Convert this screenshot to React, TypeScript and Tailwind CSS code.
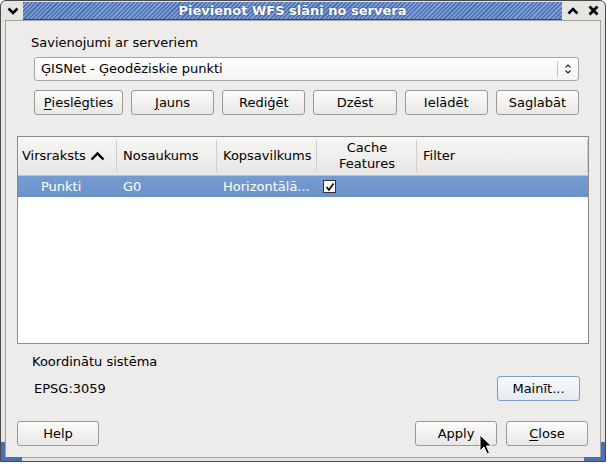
import type React from "react"

// Clearlooks-style push button
function Btn({
  children,
  className = "",
  focus = false,
}: {
  children: React.ReactNode
  className?: string
  focus?: boolean
}) {
  return (
    <div
      className={`flex h-[25px] items-center justify-center rounded-[3px] border text-[13px] text-black ${
        focus
          ? "border-[#7f9bc8] bg-[linear-gradient(#f7f9fc,#e6ebf3)]"
          : "border-[#9c9a96] bg-[linear-gradient(#fbfbfa,#e9e8e6)]"
      } ${className}`}
    >
      {children}
    </div>
  )
}

function U({ children }: { children: React.ReactNode }) {
  return <span className="underline underline-offset-[2px]">{children}</span>
}

function HeaderCell({ children, className = "", last = false }: { children: React.ReactNode; className?: string; last?: boolean }) {
  return (
    <div className={`relative flex h-full items-center ${className}`}>
      {children}
      {!last && <div className="absolute right-0 top-[3px] h-[32px] w-px bg-[#cfcdc9]" />}
    </div>
  )
}

export default function App() {
  return (
    <div className="relative h-[464px] w-[607px] overflow-hidden bg-white font-['DejaVu_Sans',sans-serif] text-[13px] text-black">
      {/* window frame */}
      <div className="relative flex h-[462px] w-[606px] flex-col rounded-t-[6px] border border-[#4a4a4a] bg-[#e6e5e2]">
        {/* title bar */}
        <div className="flex h-[19px] items-stretch">
          <div className="flex w-[22px] items-center justify-center pl-[2px]">
            <svg width="12" height="8" viewBox="0 0 12 8">
              <polyline points="1.5,1.5 6,6 10.5,1.5" fill="none" stroke="#000" strokeWidth="2.6" />
            </svg>
          </div>
          <div className="mt-[1px] flex flex-1 items-center justify-center border-b border-[#2e4470] bg-[repeating-linear-gradient(135deg,#4e71b3_0px,#4e71b3_1.5px,#7f9fd6_1.5px,#7f9fd6_3px)]">
            <span className="font-['DejaVu_Sans',sans-serif] text-[13px] font-bold leading-none text-white [text-shadow:0_0_2px_#203a70]">
              Pievienot WFS slāni no servera
            </span>
          </div>
          <div className="flex w-[22px] items-center justify-center">
            <svg width="12" height="8" viewBox="0 0 12 8">
              <polyline points="1.5,6.5 6,2 10.5,6.5" fill="none" stroke="#000" strokeWidth="2.6" />
            </svg>
          </div>
          <div className="flex w-[21px] items-center justify-center pr-[3px]">
            <svg width="11" height="11" viewBox="0 0 11 11">
              <path d="M1.5 1.5 L9.5 9.5 M9.5 1.5 L1.5 9.5" stroke="#000" strokeWidth="2.8" />
            </svg>
          </div>
        </div>

        {/* client area */}
        <div className="mx-[4px] mb-[3px] flex flex-1 flex-col border border-[#a6a4a0] bg-[#edeceb]">
          <div className="mt-[13px] pl-[25px] leading-[18px]">Savienojumi ar serveriem</div>

          {/* connection combo */}
          <div className="ml-[28px] mt-[5px] flex h-[24px] w-[545px] items-center rounded-[3px] border border-[#a7a5a1] bg-[linear-gradient(#ffffff,#f4f4f3)] pl-[6px]">
            <span className="flex-1">ĢISNet - Ģeodēziskie punkti</span>
            <div className="h-[16px] w-px bg-[#c4c2be]" />
            <div className="flex w-[20px] justify-center">
              <svg width="8" height="12" viewBox="0 0 8 12">
                <polyline points="1.5,4.5 4,2 6.5,4.5" fill="none" stroke="#222" strokeWidth="1.1" />
                <polyline points="1.5,7.5 4,10 6.5,7.5" fill="none" stroke="#222" strokeWidth="1.1" />
              </svg>
            </div>
          </div>

          {/* connection buttons */}
          <div className="ml-[28px] mt-[9px] flex w-[545px] gap-[8px]">
            <Btn className="w-[89px]">
              <U>P</U>ieslēgties
            </Btn>
            <Btn className="flex-1">
              <U>J</U>auns
            </Btn>
            <Btn className="flex-1">Rediģēt</Btn>
            <Btn className="flex-1">Dzēst</Btn>
            <Btn className="flex-1">Ielādēt</Btn>
            <Btn className="flex-1">Saglabāt</Btn>
          </div>

          {/* layer table */}
          <div className="ml-[11px] mt-[21px] flex h-[208px] w-[572px] flex-col border border-[#8e8c88] bg-white">
            <div className="flex h-[39px] border-b border-[#c3c1bd] bg-[linear-gradient(#f6f6f5,#e7e6e4)]">
              <HeaderCell className="w-[99px] pl-[4px]">
                Virsraksts
                <svg className="ml-[4px]" width="15" height="10" viewBox="0 0 15 10">
                  <polyline points="1.5,8.5 7.5,2.5 13.5,8.5" fill="none" stroke="#000" strokeWidth="2.4" />
                </svg>
              </HeaderCell>
              <HeaderCell className="w-[100px] pl-[6px]">Nosaukums</HeaderCell>
              <HeaderCell className="w-[100px] pl-[6px]">Kopsavilkums</HeaderCell>
              <HeaderCell className="w-[100px] justify-center text-center leading-[16px]">
                Cache
                <br />
                Features
              </HeaderCell>
              <HeaderCell className="flex-1 pl-[6px]">Filter</HeaderCell>
            </div>
            <div className="flex h-[21px] items-center bg-[linear-gradient(#769dd2,#6a92c8)] text-white">
              <div className="w-[99px] pl-[23px]">Punkti</div>
              <div className="w-[100px] pl-[6px]">G0</div>
              <div className="w-[100px] pl-[6px]">Horizontālā...</div>
              <div className="w-[100px] pl-[6px]">
                <div className="flex h-[13px] w-[13px] items-center justify-center border border-[#333] bg-white">
                  <svg width="10" height="10" viewBox="0 0 10 10">
                    <polyline points="1.5,5 4,8 8.5,1.5" fill="none" stroke="#000" strokeWidth="1.6" />
                  </svg>
                </div>
              </div>
            </div>
          </div>

          <div className="mt-[10px] pl-[26px] leading-[16px]">Koordinātu sistēma</div>

          <div className="ml-[28px] mr-[20px] mt-[6px] flex h-[25px] items-center justify-between">
            <span>EPSG:3059</span>
            <Btn className="w-[83px]" focus>
              Mainīt...
            </Btn>
          </div>

          {/* dialog buttons */}
          <div className="ml-[11px] mr-[12px] mt-[20px] flex">
            <Btn className="w-[82px]">Help</Btn>
            <div className="flex-1" />
            <Btn className="w-[82px]">Apply</Btn>
            <Btn className="ml-[9px] w-[82px]">
              <U>C</U>lose
            </Btn>
          </div>
        </div>

        {/* resize grips in the lower corners */}
        <div className="absolute bottom-[0px] left-[0px] h-[19px] w-[21px] border-b-[4px] border-l-[4px] border-[#4b6eb4]" />
        <div className="absolute bottom-[0px] right-[0px] h-[19px] w-[21px] border-b-[4px] border-r-[4px] border-[#4b6eb4]" />
      </div>

      {/* mouse pointer */}
      <svg className="absolute left-[479px] top-[434px]" width="14" height="22" viewBox="0 0 14 22">
        <path d="M1 1 L1 17 L5 13 L8 20 L10.5 19 L7.5 12 L12.5 12 Z" fill="#000" stroke="#fff" strokeWidth="1" />
      </svg>
    </div>
  )
}
